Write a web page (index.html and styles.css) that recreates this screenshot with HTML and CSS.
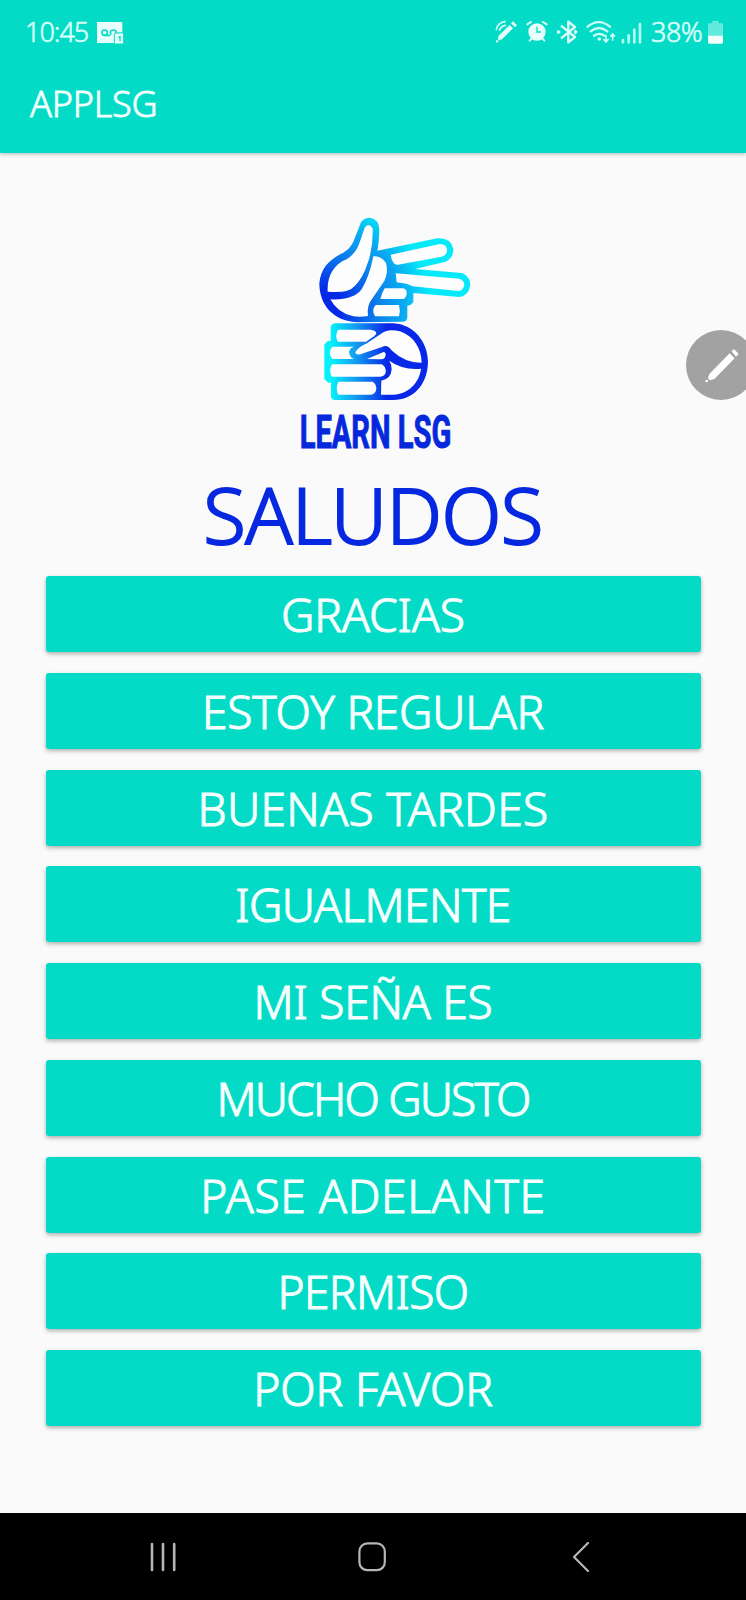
FILE: index.html
```html
<!DOCTYPE html>
<html lang="es">
<head>
<meta charset="utf-8">
<title>APPLSG</title>
<link rel="stylesheet" href="styles.css">
</head>
<body>
<div class="screen">
  <header class="appbar">
    <div class="status">
      <div class="status-left">
        <span class="clock">10:45</span>
        <svg class="voicemail" viewBox="0 0 81 66"><path fill="#e9fffb" d="M2 0h71q3 0 3 3v29h-23v31H2q-3 0-3-3V3q0-3 3-3z"/><g fill="none" stroke="#03dbc7" stroke-width="5"><circle cx="23" cy="32" r="8"/><path d="M23 40h17M42 38q-6-14 8-14q9 0 8 10"/></g><path fill="#e9fffb" stroke="#03dbc7" stroke-width="3" d="M54 33h26v33H52V38z"/><path d="M64 46l5-2v14" fill="none" stroke="#03dbc7" stroke-width="4"/></svg>
      </div>
      <div class="status-right">
        <svg class="icons" viewBox="0 0 445 72">
          <g fill="none" stroke="#d5fff9" stroke-width="5" stroke-linecap="round">
            <path d="M4 29Q8 8 30 5M14 30Q18 18 31 16"/>
          </g>
          <path fill="#e4fffb" d="M10 48L44 15l10 10-33 33-12 4zM48 10l6-6 12 12-6 6zM2 68l2-9 7 6z"/>
          <g transform="translate(93 2)">
            <circle cx="33" cy="34" r="26" fill="#e9fffb"/>
            <path d="M33 18v16h12" fill="none" stroke="#03dbc7" stroke-width="4"/>
            <path d="M4 11L15 4M51 4l11 7M11 60l6-6M49 54l6 6" stroke="#e0fffb" stroke-width="6" stroke-linecap="round"/>
          </g>
          <g fill="none" stroke="#e0fffb" stroke-width="7" stroke-linejoin="round">
            <path d="M198 17L240 51 220 67V5l20 16-42 34"/>
          </g>
          <path d="M189 29l9 7-9 7-4-7zM241 28l7 8-7 8-5-8z" fill="#e0fffb"/>
          <g fill="none" stroke="#ccfff8" stroke-width="7" stroke-linecap="round">
            <path d="M278 20Q311-7 345 20M287 34Q312 14 337 34M297 47Q313 36 328 47"/>
          </g>
          <circle cx="313" cy="57" r="5.500" fill="#ccfff8"/>
          <path d="M333 44v21m-8-8l8 9 8-9M353 62V43m-7 7l7-8 7 8" fill="none" stroke="#ccfff8" stroke-width="5"/>
          <path d="M384 60v7M401 46v21M418 29v38M435 12v55" stroke="#b5fff5" stroke-width="8" stroke-linecap="round"/>
        </svg>
        <span class="percent">38%</span>
        <svg class="battery" viewBox="0 0 45 68"><path fill="#62ebdc" d="M13 0h19v7h10q3 0 3 3v35H0V10q0-3 3-3h10z"/><path fill="#f2fffd" d="M0 44h45v20q0 4-4 4H4q-4 0-4-4z"/></svg>
      </div>
    </div>
    <div class="title"><span>APPLSG</span></div>
  </header>

  <main class="content">
    <svg class="logo" viewBox="0 0 600 810">
      <defs>
        <radialGradient id="palm" gradientUnits="userSpaceOnUse" cx="105" cy="300" r="330">
          <stop offset=".15" stop-color="#0629e8"/><stop offset=".5" stop-color="#0b84ec"/><stop offset=".7" stop-color="#0aa6f0"/><stop offset=".95" stop-color="#05e9f8"/>
        </radialGradient>
        <linearGradient id="fist" gradientUnits="userSpaceOnUse" x1="100" x2="290" y1="0" y2="0">
          <stop offset=".12" stop-color="#05f2fa"/><stop offset=".5" stop-color="#139ff0"/><stop offset="1" stop-color="#0728e8"/>
        </linearGradient>
      </defs>
      <path fill="url(#palm)" d="M213 52Q221 38 240 38Q267 42 268 75Q267 112 262 137L442 100Q483 97 490 132Q491 159 467 170L375 192L515 204Q540 212 541 240Q537 272 508 276L370 264V292Q364 301 352 302V338Q350 350 338 350L200 352C130 348 88 300 88 235C92 188 120 162 160 143Q182 130 191 108Z"/>
      <g fill="#fdfdfd">
        <path d="M224 68Q236 51 248 70Q250 135 229 185Q218 218 195 242Q175 266 113 260C111 215 130 178 170 163Q198 145 208 115Z"/>
        <path d="M121 283Q190 286 215 253Q238 215 250 154Q273 151 288 174Q296 200 283 228L246 282Q230 300 234 333Q210 337 190 334Q142 324 121 283Z"/>
        <path d="M302 149L450 117Q470 118 471 134Q472 150 455 155L324 179Q307 181 302 149Z"/>
        <path d="M317 205L508 221Q523 226 523 240Q520 257 505 258L368 244L350 236L320 232Z"/>
        <path d="M284 250H340Q351 252 350 268Q347 282 338 282H271Q275 265 284 250Z"/>
        <path d="M257 300H327Q332 318 327 334H255Q243 316 257 300Z"/>
      </g>
      <g transform="translate(0 315)">
        <path fill="url(#fist)" d="M135 40H310C370 43 414 95 414 157C412 225 370 270 310 270H135Q123 270 123 258V218H115L103 207V104L112 94L122 92V52Q123 42 135 40Z"/>
        <g fill="#fdfdfd">
          <path d="M144 59H242Q268 64 254 77L228 95H144Q133 80 144 59Z"/>
          <path d="M127 110H192Q180 113 177 126Q179 142 192 147H127Q112 128 127 110Z"/>
          <path d="M126 163H275Q289 171 287 187Q284 200 270 200H126Q114 182 126 163Z"/>
          <path d="M145 215H248Q262 224 258 241Q255 253 243 254H145Q135 235 145 215Z"/>
          <path d="M196 129Q199 114 232 99L272 72Q292 54 330 64C372 79 394 115 395 158Q346 159 306 122Q292 101 276 111L211 133Q200 135 196 129Z"/>
          <path d="M231 147L281 126Q290 128 286 139Q284 148 274 148Z"/>
          <path d="M274 212Q303 207 305 178Q305 164 298 152Q338 181 393 176C388 218 355 252 310 254H273Z"/>
        </g>
      </g>
      <text class="logo-text" x="29" y="728" textLength="455" lengthAdjust="spacingAndGlyphs">LEARN LSG</text>
    </svg>
    <h1 class="heading"><span>SALUDOS</span></h1>
    <div class="buttons">
      <button><span>GRACIAS</span></button>
      <button class="snug"><span>ESTOY REGULAR</span></button>
      <button class="loose"><span>BUENAS TARDES</span></button>
      <button class="tight"><span>IGUALMENTE</span></button>
      <button class="snug"><span>MI SEÑA ES</span></button>
      <button class="tightest"><span>MUCHO GUSTO</span></button>
      <button class="loosest"><span>PASE ADELANTE</span></button>
      <button class="tight"><span>PERMISO</span></button>
      <button><span>POR FAVOR</span></button>
    </div>
  </main>

  <nav class="navbar">
    <svg width="26" viewBox="0 0 26 30"><path d="M2 2v26M13 2v26M24.200 2v26" stroke-width="2.600"/></svg>
    <svg width="28" viewBox="0 0 28 30"><rect x="1.400" y="1.400" width="25.400" height="26.800" rx="8" stroke-width="2.200"/></svg>
    <svg width="18" viewBox="0 0 18 30"><path d="M16 1L2 15l14 14" stroke-width="2.200"/></svg>
  </nav>

  <div class="pen">
    <svg viewBox="0 0 210 210"><path fill="#fff" d="M70 132L131 70l15 15-61 62-14 4-5-6zM137 64l7-7 14 15-8 8z"/><circle cx="62" cy="153" r="4" fill="#fff"/></svg>
  </div>
</div>
</body>
</html>
```
FILE: styles.css
```css
* { box-sizing: border-box; }
body { margin: 0; font-family: "Noto Sans", sans-serif; font-weight: 300; }
svg { display: block; flex: none; }
.screen { position: relative; display: flex; flex-direction: column; width: 746px; height: 1600px; overflow: hidden; background: #fafafa; }
.appbar { flex: none; height: 153px; background: #03dbc7; box-shadow: 0 1px 4px rgba(0,0,0,.28); color: #f2fffd; }
.status { display: flex; justify-content: space-between; height: 64px; padding: 0 23px 0 25px; }
.status-left, .status-right { display: flex; align-items: center; }
.status span { line-height: 64px; font-size: 27px; color: #d8fff9; white-space: nowrap; -webkit-text-stroke: .6px #d8fff9; }
.clock { width: 72px; letter-spacing: -1px; }
.voicemail { width: 27px; height: 22px; margin-top: 2px; }
.icons { width: 148.300px; height: 24px; margin-right: 8px; }
.percent { width: 57px; letter-spacing: -.500px; }
.battery { width: 15px; height: 22.700px; margin-top: 1px; }
.title { height: 80px; padding-left: 30px; font-size: 36px; line-height: 80px; letter-spacing: -.200px; -webkit-text-stroke: .8px #f2fffd; }
.title span, .heading span, button span { display: inline-block; }
.content { flex: 1; display: flex; flex-direction: column; align-items: center; padding-top: 52px; }
.logo { width: 200px; height: 270px; margin-left: 34px; overflow: visible; }
.logo-text { font-family: "Liberation Sans Narrow", "Roboto", sans-serif; font-weight: 700; font-size: 140px; fill: #0628dc; stroke: #0628dc; stroke-width: 3px; }
.heading { margin: 0; height: 101px; font-size: 78px; line-height: 78px; font-weight: 300; letter-spacing: -.600px; color: #0628e0; -webkit-text-stroke: 2px #0628e0; }
.buttons { display: flex; flex-direction: column; gap: 20.750px; width: 655px; }
button { height: 76px; padding: 0; border: 0; border-radius: 3px; background: #03dbc7; box-shadow: 0 2px 4px rgba(0,0,0,.3); color: #f6fffe; font: 300 46px/76px "Noto Sans", sans-serif; white-space: nowrap; -webkit-text-stroke: 1.1px #f6fffe; }
.snug { letter-spacing: -.200px; }
.tight { letter-spacing: -.550px; }
.tightest { letter-spacing: -1.800px; }
.loose { letter-spacing: .350px; }
.loosest { letter-spacing: .700px; }
.navbar { flex: none; height: 87px; display: flex; justify-content: space-between; align-items: center; padding: 0 156px 0 150px; background: #000; }
.navbar svg { height: 30px; fill: none; stroke: #b6b6b6; stroke-linecap: round; stroke-linejoin: round; }
.navbar svg:nth-child(2) { margin-right: 4px; }
.pen { position: absolute; left: 685.500px; top: 330px; width: 70px; height: 70px; border-radius: 50%; background: #a2a2a2; }
.pen svg { width: 70px; height: 70px; }
```
